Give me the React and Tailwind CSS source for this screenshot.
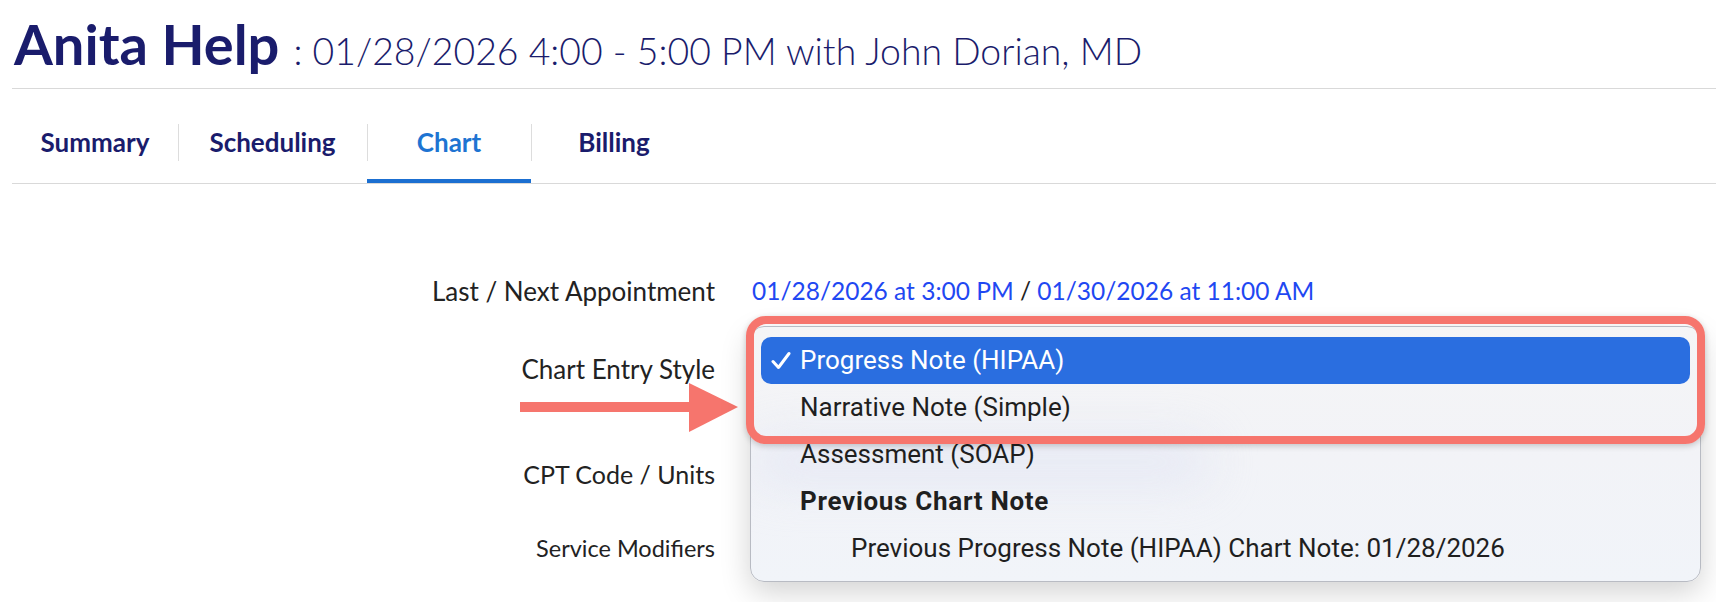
import React from 'react';

const tabs = [
  { name: 'Summary', width: 'w-[166px]' },
  { name: 'Scheduling', width: 'w-[189px]' },
  { name: 'Chart', width: 'w-[164px]', active: true },
  { name: 'Billing', width: 'w-[166px]' },
];

const options = [
  { label: 'Progress Note (HIPAA)', selected: true },
  { label: 'Narrative Note (Simple)' },
  { label: 'Assessment (SOAP)' },
  { label: 'Previous Chart Note', group: true },
  { label: 'Previous Progress Note (HIPAA) Chart Note: 01/28/2026', nested: true },
];

const Arrow = () => (
  <svg className="absolute left-[520px] top-[380px]" width="222" height="56" viewBox="0 0 222 56">
    <rect x="0" y="22" width="172" height="10" fill="#f6756d" />
    <polygon points="169,3 218,27 169,52" fill="#f6756d" />
  </svg>
);

const ChartEntryDropdown = () => (
  <>
    <div className="absolute left-[750px] top-[326px] w-[951px] h-[256px] rounded-[14px] border border-[#b8bbc3] bg-gradient-to-b from-[#f5f5f6] via-[#f2f3f7] to-[#f1f4f9] shadow-[0_10px_30px_rgba(0,0,0,0.18)] overflow-hidden">
      <div className="absolute left-[0px] top-[112px] w-[460px] h-[46px] rounded-full bg-[#dfe3f3] blur-xl opacity-60" />
      <div className="relative flex flex-col p-[10px]">
        {options.map((opt) => (
          <div
            key={opt.label}
            className={`flex items-center h-[47px] rounded-[10px] text-[26px] font-['Roboto',sans-serif] ${
              opt.selected ? 'bg-[#2a6ee0] text-white' : 'text-[#1f1f1f]'
            } ${opt.group ? 'font-bold tracking-[0.7px]' : ''} ${opt.nested ? 'pl-[90px]' : 'pl-[39px]'}`}
          >
            {opt.selected && (
              <svg className="absolute left-[20px]" width="20" height="20" viewBox="0 0 20 20">
                <path d="M2 10.5 L7.5 16.5 L18 2.5" fill="none" stroke="white" strokeWidth="3" strokeLinecap="round" strokeLinejoin="round" />
              </svg>
            )}
            {opt.label}
          </div>
        ))}
      </div>
    </div>
    <div className="absolute left-[746px] top-[316px] w-[959px] h-[128px] rounded-[20px] border-[8px] border-[#f6756d] shadow-[0_2px_6px_rgba(0,0,0,0.2)]" />
  </>
);

const App = () => {
  return (
    <div className="relative w-full h-[602px] overflow-hidden bg-white font-['Lato',sans-serif]">
      <div className="flex items-baseline h-[88px] pl-[14px] pt-[4px] text-[#1a1c6c]">
        <h1 className="text-[56px] font-bold leading-[80px]">Anita Help</h1>
        <span className="ml-[14px] text-[37.4px] font-light">: 01/28/2026 4:00 - 5:00 PM with John Dorian, MD</span>
      </div>

      <div className="ml-[12px] border-t border-[#d9d9d9]">
        <div className="flex h-[95px] border-b border-[#d9d9d9]">
          {tabs.map((tab, i) => (
            <div key={tab.name} className={`relative flex items-center justify-center pt-[13px] ${tab.width}`}>
              {i > 0 && <div className="absolute left-0 top-[35px] h-[37px] w-px bg-[#dddddd]" />}
              <span className={`text-[26px] font-bold ${tab.active ? 'text-[#1e74d2]' : 'text-[#1a1c6c]'}`}>
                {tab.name}
              </span>
              {tab.active && <div className="absolute left-0 right-0 bottom-0 h-[4px] bg-[#1b6fd1]" />}
            </div>
          ))}
        </div>
      </div>

      <div className="flex flex-col pt-[87px] text-[#222222]">
        <div className="flex items-center h-[40px]">
          <div className="w-[715px] text-right text-[26px]">Last / Next Appointment</div>
          <div className="ml-[37px] text-[24.5px]">
            <a className="text-[#1f48f2]">01/28/2026 at 3:00 PM</a> / <a className="text-[#1f48f2]">01/30/2026 at 11:00 AM</a>
          </div>
        </div>
        <div className="flex items-center h-[40px] mt-[38px]">
          <div className="w-[715px] text-right text-[26px]">Chart Entry Style</div>
        </div>
        <div className="flex items-center h-[40px] mt-[66px]">
          <div className="w-[715px] text-right text-[25px]">CPT Code / Units</div>
        </div>
        <div className="flex items-center h-[40px] mt-[34px]">
          <div className="w-[715px] text-right text-[23.5px]">Service Modifiers</div>
        </div>
      </div>

      <Arrow />
      <ChartEntryDropdown />
    </div>
  );
};

export default App;
